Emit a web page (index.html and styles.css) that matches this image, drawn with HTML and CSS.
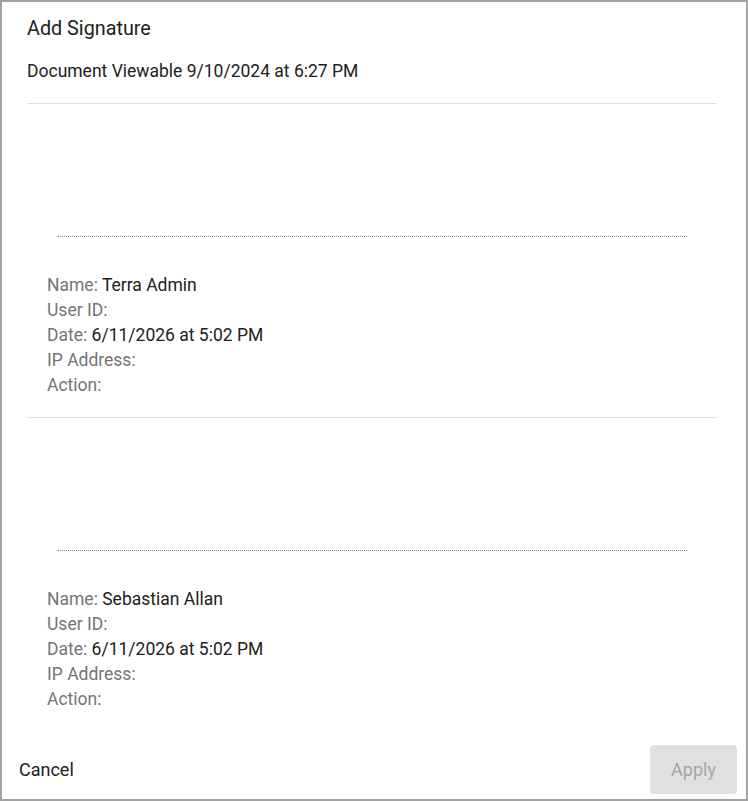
FILE: index.html
```html
<!DOCTYPE html>
<html lang="en">
<head>
<meta charset="utf-8">
<title>Add Signature</title>
<link rel="stylesheet" href="styles.css">
</head>
<body>
<div class="dialog">
  <div class="content">
    <h1 class="title">Add Signature</h1>
    <p class="viewable">Document Viewable 9/10/2024 at 6:27 PM</p>
    <div class="sig-block">
      <div class="sig-area"></div>
      <div class="sig-line"></div>
      <div class="sig-info">
        <div class="row"><span class="label">Name:</span> <span class="value">Terra Admin</span></div>
        <div class="row"><span class="label">User ID:</span></div>
        <div class="row"><span class="label">Date:</span> <span class="value">6/11/2026 at 5:02 PM</span></div>
        <div class="row"><span class="label">IP Address:</span></div>
        <div class="row"><span class="label">Action:</span></div>
      </div>
    </div>
    <div class="sig-block">
      <div class="sig-area"></div>
      <div class="sig-line"></div>
      <div class="sig-info">
        <div class="row"><span class="label">Name:</span> <span class="value">Sebastian Allan</span></div>
        <div class="row"><span class="label">User ID:</span></div>
        <div class="row"><span class="label">Date:</span> <span class="value">6/11/2026 at 5:02 PM</span></div>
        <div class="row"><span class="label">IP Address:</span></div>
        <div class="row"><span class="label">Action:</span></div>
      </div>
    </div>
  </div>
  <div class="footer">
    <button class="btn-cancel" type="button">Cancel</button>
    <button class="btn-apply" type="button" disabled>Apply</button>
  </div>
</div>
</body>
</html>
```

FILE: styles.css
```css
* { box-sizing: border-box; }
html, body { margin: 0; padding: 0; background: #ffffff; }
body { font-family: Roboto, "Liberation Sans", sans-serif; color: #212121; }

.dialog {
  width: 748px;
  height: 801px;
  border: 2px solid #a2a2a2;
  display: flex;
  flex-direction: column;
  overflow: hidden;
}

.content {
  flex: 1;
  padding: 15px 29px 0 25px;
  overflow: hidden;
}

.title {
  margin: 0;
  font-size: 19.8px;
  font-weight: 400;
  line-height: 24px;
  color: #212121;
}

.viewable {
  margin: 19px 0 0;
  font-size: 17.5px;
  line-height: 22px;
  color: #212121;
  padding-bottom: 21px;
  border-bottom: 1px solid #e0e0e0;
}

.sig-block {
  border-bottom: 1px solid #e0e0e0;
}
.sig-block:last-child { border-bottom: none; }

.sig-area { height: 132px; }

.sig-line {
  margin: 0 30px;
  border-top: 1px dotted #8f8f8f;
}

.sig-info {
  padding: 36px 20px 19px;
}

.row {
  font-size: 17.5px;
  line-height: 25px;
  height: 25px;
}
.label { color: #757575; }
.value { color: #212121; }

.footer {
  height: 60px;
  display: flex;
  justify-content: space-between;
  align-items: center;
  padding: 0 9px 0 17px;
}

.btn-cancel {
  font-family: Roboto, "Liberation Sans", sans-serif;
  font-size: 18px;
  color: #212121;
  background: none;
  border: none;
  padding: 0;
  margin-top: 1px;
}

.btn-apply {
  font-family: Roboto, "Liberation Sans", sans-serif;
  font-size: 18px;
  color: #a6a6a6;
  background: #e0e0e0;
  border: none;
  border-radius: 4px;
  width: 87px;
  height: 49px;
  padding: 0;
}
```
